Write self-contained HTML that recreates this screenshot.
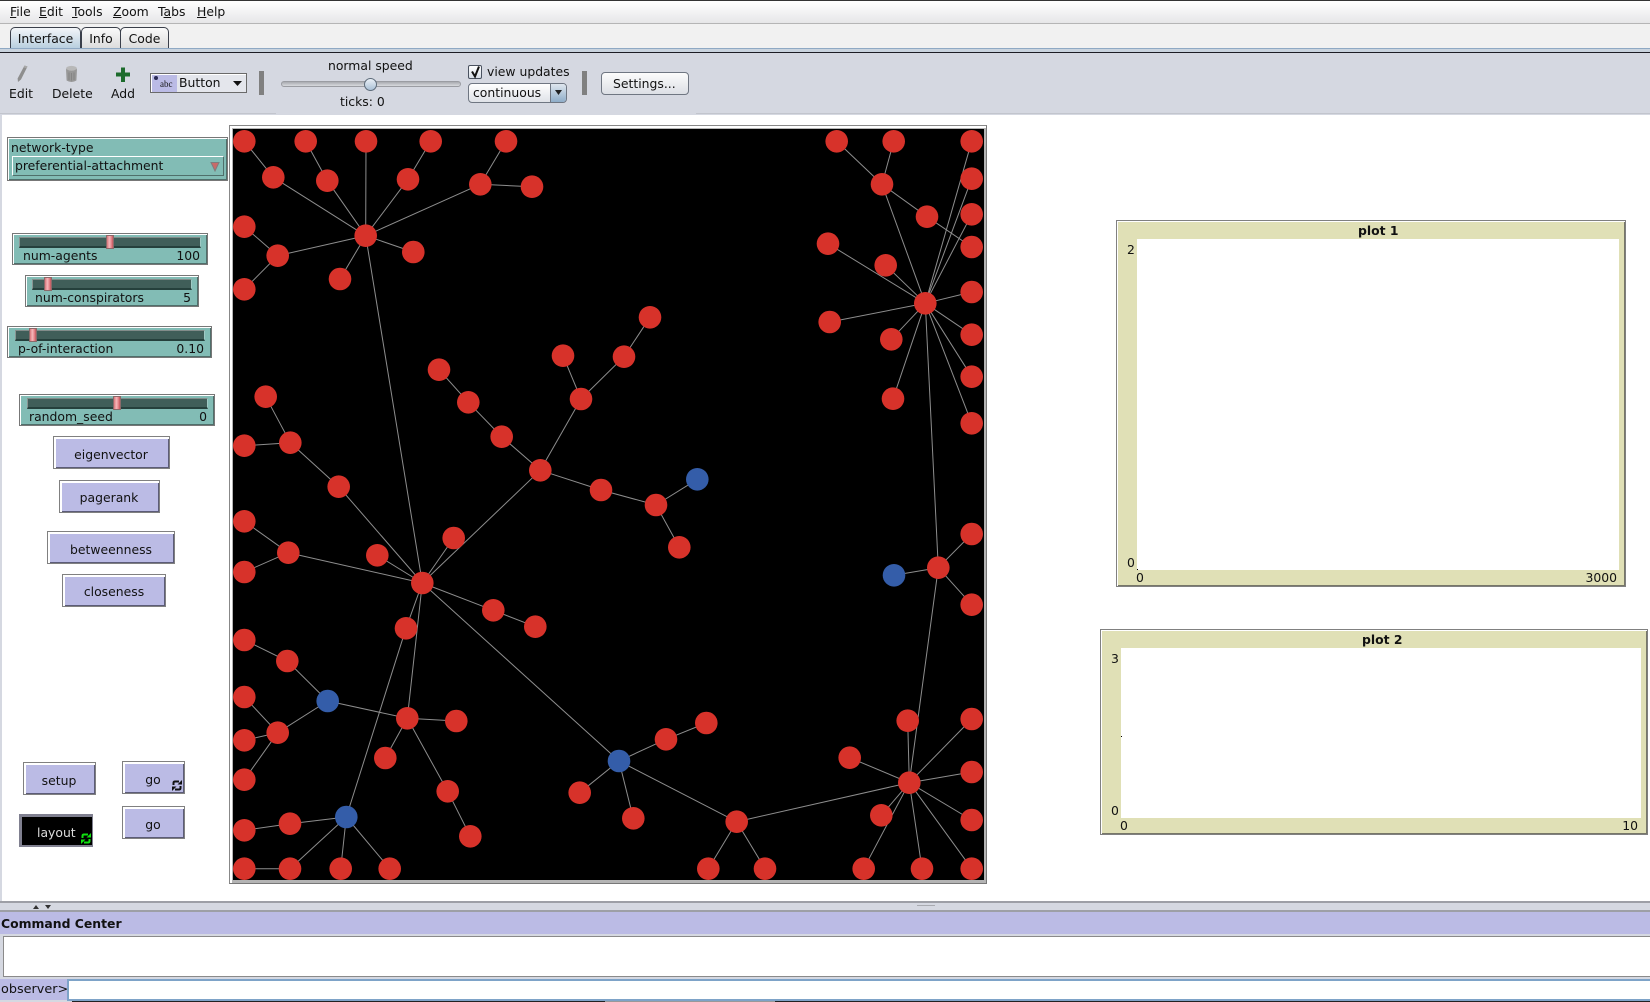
<!DOCTYPE html>
<html><head><meta charset="utf-8"><style>
html,body{margin:0;padding:0;background:#fff}
#r{position:relative;width:1650px;height:1002px;overflow:hidden;background:#fff;font:12.4px/16px "DejaVu Sans","Liberation Sans",sans-serif;color:#111}
#r div,#r span.t{position:absolute;box-sizing:border-box}
.t{white-space:nowrap}
.b{background:#bbbbe5;border:1px solid #808080;box-shadow:inset 2px 2px 0 #fff,inset -1px -1px 0 #5c5c78;text-align:center;line-height:33px;padding-right:1px}
.s{background:#82bcb5;border:1px solid #777;box-shadow:inset 1px 1px 0 #fff,inset -1px -1px 0 #4f6f6b;height:32px}
.tr{background:#405e59;border-top:1px solid #828c8a;border-left:1px solid #8a9593;border-bottom:2px solid #25403c;border-right:1px solid #9fc9c4;height:11px;top:3px}
.k{background:linear-gradient(90deg,#d8747a,#f5b8ba 40%,#e8898f 70%,#c0565c);border:1px solid #8a6a6a;width:8px;height:14px;top:1px}
.pl{background:#e0e0b6;border:1px solid #808080;box-shadow:inset 1px 1px 0 #fff,inset -1px -1px 0 #777768}
.tab{border:1px solid #3a3f4a;border-bottom:none;border-radius:5px 5px 0 0;background:linear-gradient(#fafafa,#dcdcdc);text-align:center;top:27px;height:21px;line-height:21px}
</style></head><body><div id="r">

<!-- menu -->
<div style="left:0;top:0;width:1650px;height:24px;background:linear-gradient(#fff,#e6e6e8);border-top:1px solid #333;border-bottom:1px solid #b5b5b5"></div>
<span class="t" style="left:10px;top:4px"><u>F</u>ile</span>
<span class="t" style="left:39px;top:4px"><u>E</u>dit</span>
<span class="t" style="left:72px;top:4px"><u>T</u>ools</span>
<span class="t" style="left:113px;top:4px"><u>Z</u>oom</span>
<span class="t" style="left:158px;top:4px">T<u>a</u>bs</span>
<span class="t" style="left:197px;top:4px"><u>H</u>elp</span>

<!-- tabs -->
<div style="left:0;top:24px;width:1650px;height:24px;background:#f1f1f1"></div>
<div class="tab" style="left:10px;width:71px;background:linear-gradient(#f2f5f8,#b9cfdf)">Interface</div>
<div class="tab" style="left:81px;width:40px">Info</div>
<div class="tab" style="left:120px;width:49px">Code</div>
<div style="left:0;top:48px;width:1650px;height:4px;background:#c9d3de;border-top:1px solid #8fa9c4"></div>
<div style="left:0;top:52px;width:1650px;height:1px;background:#1c1c24"></div>

<!-- toolbar -->
<div style="left:0;top:53px;width:1650px;height:62px;background:#d5d8e1"></div>
<div style="left:0;top:113px;width:276px;height:1px;background:#c2c5cd"></div>
<div style="left:696px;top:113px;width:954px;height:1px;background:#c2c5cd"></div>
<svg style="position:absolute;left:14px;top:64px" width="16" height="19" viewBox="0 0 16 19"><path d="M10.5 1.5 L13.5 2.5 L7 15.5 L4 18 L3.6 14.5 Z" fill="#8e8e8e"/><path d="M10.5 1.5 L13.5 2.5 L12.6 4.4 L9.6 3.2 Z" fill="#a8a8a8"/></svg>
<svg style="position:absolute;left:63px;top:65px" width="16" height="18" viewBox="0 0 16 18"><ellipse cx="8.500" cy="3.500" rx="5.500" ry="2.600" fill="#b8b8b8"/><path d="M3 4 L3.600 15.500 Q8.500 18.500 13.400 15.500 L14 4 Q8.500 7.500 3 4Z" fill="#989898"/><path d="M6 7.500 V15 M8.500 8 V15.500 M11 7.500 V15" stroke="#858585" stroke-width="1"/></svg>
<svg style="position:absolute;left:116px;top:67px" width="14" height="15" viewBox="0 0 14 15"><path d="M5 0.5h4v5h5v4H9v5.500H5V9.500H0v-4h5z" fill="#1c6b2c"/></svg>
<span class="t" style="left:9px;top:86px">Edit</span>
<span class="t" style="left:52px;top:86px">Delete</span>
<span class="t" style="left:111px;top:86px">Add</span>

<div style="left:150px;top:73px;width:97px;height:20px;background:#e4e6ec;border:1px solid #6a6a6a;box-shadow:inset 1px 1px 0 #fff"></div>
<div style="left:152px;top:75px;width:25px;height:17px;background:#bbbbe5"></div>
<span class="t" style="left:160px;top:77px;font:9px/14px 'Liberation Serif',serif">abc</span>
<div style="left:154px;top:76px;width:4px;height:4px;background:#2b2b55;border-radius:2px"></div>
<span class="t" style="left:179px;top:75px">Button</span>
<svg style="position:absolute;left:233px;top:81px" width="10" height="6"><path d="M0 0h9L4.500 5z" fill="#111"/></svg>

<div style="left:259px;top:71px;width:5px;height:24px;background:#808080"></div>
<div style="left:582px;top:71px;width:5px;height:24px;background:#808080"></div>

<span class="t" style="left:328px;top:58px">normal speed</span>
<div style="left:281px;top:81px;width:180px;height:6px;background:linear-gradient(#a9abb0,#d8dade);border:1px solid #9a9ca2;border-radius:3px"></div>
<div style="left:364px;top:78px;width:13px;height:13px;border-radius:50%;background:linear-gradient(#eaf0f6,#a9c0d6);border:1px solid #5d6b7a"></div>
<span class="t" style="left:340px;top:94px">ticks: 0</span>

<div style="left:468px;top:65px;width:14px;height:14px;background:linear-gradient(#fff,#d6dde6);border:1px solid #4a5260;border-radius:2px"></div>
<svg style="position:absolute;left:469px;top:64px" width="13" height="15"><path d="M3 7.500 L6 12.500 L10 2.500" fill="none" stroke="#111" stroke-width="2"/></svg>
<span class="t" style="left:487px;top:64px">view updates</span>

<div style="left:468px;top:83px;width:99px;height:20px;background:linear-gradient(#fff,#dfe2e8);border:1px solid #6f7682;border-radius:4px"></div>
<div style="left:550px;top:84px;width:16px;height:18px;background:linear-gradient(#dfe6ee,#8fadc9);border-left:1px solid #6f7682;border-radius:0 3px 3px 0"></div>
<svg style="position:absolute;left:555px;top:90px" width="8" height="6"><path d="M0 0h7L3.500 5z" fill="#222"/></svg>
<span class="t" style="left:473px;top:85px">continuous</span>

<div style="left:601px;top:72px;width:88px;height:23px;background:linear-gradient(#fcfcfc,#dcdfe5);border:1px solid #6f7682;border-radius:4px"></div>
<span class="t" style="left:613px;top:76px">Settings...</span>

<div style="left:0;top:115px;width:2px;height:787px;background:#d5d8e1"></div>

<!-- chooser -->
<div style="left:7px;top:137px;width:221px;height:44px;background:#82bcb5;border:1px solid #777;box-shadow:inset 1px 1px 0 #fff,inset -1px -1px 0 #4f6f6b"></div>
<span class="t" style="left:11px;top:140px">network-type</span>
<div style="left:12px;top:156px;width:212px;height:20px;background:#82bcb5;border:1px solid #fff;border-right-color:#4f6f6b;border-bottom-color:#4f6f6b"></div>
<span class="t" style="left:15px;top:158px">preferential-attachment</span>
<svg style="position:absolute;left:210px;top:161px" width="10" height="11"><path d="M1 1.500h8L5 10z" fill="#c96a68" stroke="#7d7d7d"/></svg>

<!-- sliders -->
<div class="s" style="left:12px;top:233px;width:196px"><div class="tr" style="left:6px;width:182px"></div><div class="k" style="left:93px"></div><span class="t" style="left:10px;top:14px">num-agents</span><span class="t" style="right:7px;top:14px">100</span></div>
<div class="s" style="left:25px;top:275px;width:174px"><div class="tr" style="left:6px;width:160px"></div><div class="k" style="left:18px"></div><span class="t" style="left:9px;top:14px">num-conspirators</span><span class="t" style="right:7px;top:14px">5</span></div>
<div class="s" style="left:7px;top:326px;width:205px"><div class="tr" style="left:7px;width:190px"></div><div class="k" style="left:21px"></div><span class="t" style="left:10px;top:14px">p-of-interaction</span><span class="t" style="right:7px;top:14px">0.10</span></div>
<div class="s" style="left:19px;top:394px;width:196px"><div class="tr" style="left:7px;width:181px"></div><div class="k" style="left:93px"></div><span class="t" style="left:9px;top:14px">random_seed</span><span class="t" style="right:7px;top:14px">0</span></div>

<!-- buttons -->
<div class="b" style="left:53px;top:436px;width:117px;height:33px;line-height:35px">eigenvector</div>
<div class="b" style="left:59px;top:480px;width:101px;height:33px">pagerank</div>
<div class="b" style="left:47px;top:531px;width:128px;height:33px;line-height:35px;padding-left:1px">betweenness</div>
<div class="b" style="left:62px;top:574px;width:104px;height:33px;padding-left:1px">closeness</div>
<div class="b" style="left:23px;top:762px;width:73px;height:33px;line-height:35px">setup</div>
<div class="b" style="left:122px;top:761px;width:63px;height:33px;line-height:35px">go</div>
<div class="b" style="left:122px;top:806px;width:63px;height:33px;line-height:35px">go</div>
<svg style="position:absolute;left:172px;top:780px" width="10" height="11" viewBox="0 0 10 11"><path d="M1.500 5 V3 Q1.500 1.500 3 1.500 H7" fill="none" stroke="#111" stroke-width="2"/><path d="M5.500 4.500 H10 V0 Z" fill="#111"/><path d="M8.500 6 V8 Q8.500 9.500 7 9.500 H3" fill="none" stroke="#111" stroke-width="2"/><path d="M4.500 6.500 H0 V11 Z" fill="#111"/></svg>

<div style="left:19px;top:814px;width:75px;height:33px;background:#808090;border-right:1px solid #fff"></div>
<div style="left:22px;top:817px;width:70px;height:28px;background:#000"></div>
<span class="t" style="left:37px;top:825px;color:#ddd">layout</span>
<svg style="position:absolute;left:81px;top:833px" width="10" height="11" viewBox="0 0 10 11"><path d="M1.500 5 V3 Q1.500 1.500 3 1.500 H7" fill="none" stroke="#10e010" stroke-width="2"/><path d="M5.500 4.500 H10 V0 Z" fill="#10e010"/><path d="M8.500 6 V8 Q8.500 9.500 7 9.500 H3" fill="none" stroke="#10e010" stroke-width="2"/><path d="M4.500 6.500 H0 V11 Z" fill="#10e010"/></svg>

<!-- view -->
<div style="left:229px;top:125px;width:758px;height:759px;background:#b4b4b4;border:1px solid #777;border-top-color:#888;border-left-color:#888;box-shadow:inset 2px 2px 0 #fff"></div>
<svg style="position:absolute;left:233px;top:129px;overflow:hidden;background:#000" width="751" height="751" viewBox="233 129 751 751">
<g stroke="#8d8d8d" stroke-width="1" fill="none">
<path d="M365.700 235.700L273.300 177.300M365.700 235.700L327.300 180.700M365.700 235.700L366 141.300M365.700 235.700L408 179.300M365.700 235.700L480.300 184.300M365.700 235.700L277.700 255.700M365.700 235.700L413.300 252M365.700 235.700L340 279M365.700 235.700L422.300 583"/>
<path d="M244.300 141.300L273.300 177.300M305.700 141.300L327.300 180.700M430.700 141.300L408 179.300M506 141.300L480.300 184.300M480.300 184.300L532 186.700M244.300 226.700L277.700 255.700M244.300 289.300L277.700 255.700"/>
<path d="M439 369.700L468.300 402.300L501.700 436.700L540.300 470.300M563 355.700L581 399M624 356.700L581 399M650 317.300L624 356.700M581 399L540.300 470.300M540.300 470.300L601 490L656 505M656 505L697.300 479.300M656 505L679.300 547.300M540.300 470.300L422.300 583"/>
<path d="M265.700 396.700L290.300 442.700M244.300 445.700L290.300 442.700M290.300 442.700L338.700 486.700L422.300 583"/>
<path d="M244.300 521.300L288.300 552.700M244.300 572L288.300 552.700M288.300 552.700L422.300 583M377.300 555.300L422.300 583M453.700 538L422.300 583M422.300 583L493.300 610.300L535.300 626.700M422.300 583L406 628.300L346.300 817M422.300 583L407.300 718.300M422.300 583L619 761"/>
<path d="M244.300 640L287.300 661L327.700 701M327.700 701L407.300 718.300M327.700 701L277.700 732.700M244.300 697L277.700 732.700M244.300 740.300L277.700 732.700M244.300 779.700L277.700 732.700M407.300 718.300L456.300 721M407.300 718.300L385.300 758M407.300 718.300L447.700 791.300L470.300 836.300"/>
<path d="M346.300 817L290 823.700L244.300 830.300M346.300 817L290 868.700L244.300 868.700M346.300 817L340.700 868.700M346.300 817L389.700 868.700"/>
<path d="M619 761L666 739.300L706.300 723M619 761L579.700 792.700M619 761L633.300 818.300M619 761L736.700 821.700M736.700 821.700L708.300 868.700M736.700 821.700L765 868.700M736.700 821.700L909.300 782.700"/>
<path d="M909.300 782.700L907.700 720.700M909.300 782.700L971.700 719M909.300 782.700L849.700 757.700M909.300 782.700L971.700 772M909.300 782.700L881.300 815.300M909.300 782.700L971.700 820M909.300 782.700L863.700 868.700M909.300 782.700L922 868.700M909.300 782.700L971.700 868.700M909.300 782.700L938.300 567.700"/>
<path d="M938.300 567.700L971.700 534M938.300 567.700L894 575.300M938.300 567.700L971.700 604.700M938.300 567.700L925.300 303.300"/>
<path d="M925.300 303.300L882 184.300M925.300 303.300L971.700 141.300M925.300 303.300L971.700 178.700M925.300 303.300L971.700 214.300M925.300 303.300L828 243.700M925.300 303.300L885.700 265.300M925.300 303.300L971.700 292M925.300 303.300L829.700 322M925.300 303.300L971.700 334.700M925.300 303.300L891.300 339.300M925.300 303.300L971.700 376.700M925.300 303.300L893 398.700M925.300 303.300L971.700 423.300M882 184.300L836.700 141.300M882 184.300L893.700 141.300M882 184.300L927 216.700L971.700 247"/>
</g>
<g fill="#d7322a">
<circle cx="244.300" cy="141.300" r="11.300"/><circle cx="305.700" cy="141.300" r="11.300"/><circle cx="366" cy="141.300" r="11.300"/><circle cx="430.700" cy="141.300" r="11.300"/><circle cx="506" cy="141.300" r="11.300"/><circle cx="273.300" cy="177.300" r="11.300"/><circle cx="327.300" cy="180.700" r="11.300"/><circle cx="408" cy="179.300" r="11.300"/><circle cx="480.300" cy="184.300" r="11.300"/><circle cx="532" cy="186.700" r="11.300"/><circle cx="365.700" cy="235.700" r="11.300"/><circle cx="244.300" cy="226.700" r="11.300"/><circle cx="277.700" cy="255.700" r="11.300"/><circle cx="413.300" cy="252" r="11.300"/><circle cx="340" cy="279" r="11.300"/><circle cx="244.300" cy="289.300" r="11.300"/>
<circle cx="563" cy="355.700" r="11.300"/><circle cx="624" cy="356.700" r="11.300"/><circle cx="650" cy="317.300" r="11.300"/><circle cx="439" cy="369.700" r="11.300"/><circle cx="581" cy="399" r="11.300"/><circle cx="468.300" cy="402.300" r="11.300"/><circle cx="265.700" cy="396.700" r="11.300"/><circle cx="501.700" cy="436.700" r="11.300"/><circle cx="290.300" cy="442.700" r="11.300"/><circle cx="244.300" cy="445.700" r="11.300"/><circle cx="540.300" cy="470.300" r="11.300"/><circle cx="338.700" cy="486.700" r="11.300"/><circle cx="601" cy="490" r="11.300"/><circle cx="656" cy="505" r="11.300"/><circle cx="679.300" cy="547.300" r="11.300"/>
<circle cx="244.300" cy="521.300" r="11.300"/><circle cx="288.300" cy="552.700" r="11.300"/><circle cx="377.300" cy="555.300" r="11.300"/><circle cx="453.700" cy="538" r="11.300"/><circle cx="244.300" cy="572" r="11.300"/><circle cx="422.300" cy="583" r="11.300"/><circle cx="493.300" cy="610.300" r="11.300"/><circle cx="535.300" cy="626.700" r="11.300"/><circle cx="406" cy="628.300" r="11.300"/><circle cx="244.300" cy="640" r="11.300"/><circle cx="287.300" cy="661" r="11.300"/><circle cx="244.300" cy="697" r="11.300"/><circle cx="407.300" cy="718.300" r="11.300"/><circle cx="456.300" cy="721" r="11.300"/><circle cx="277.700" cy="732.700" r="11.300"/><circle cx="244.300" cy="740.300" r="11.300"/><circle cx="385.300" cy="758" r="11.300"/><circle cx="244.300" cy="779.700" r="11.300"/><circle cx="447.700" cy="791.300" r="11.300"/><circle cx="579.700" cy="792.700" r="11.300"/><circle cx="470.300" cy="836.300" r="11.300"/><circle cx="290" cy="823.700" r="11.300"/><circle cx="244.300" cy="830.300" r="11.300"/><circle cx="244.300" cy="868.700" r="11.300"/><circle cx="290" cy="868.700" r="11.300"/><circle cx="340.700" cy="868.700" r="11.300"/><circle cx="389.700" cy="868.700" r="11.300"/>
<circle cx="836.700" cy="141.300" r="11.300"/><circle cx="893.700" cy="141.300" r="11.300"/><circle cx="971.700" cy="141.300" r="11.300"/><circle cx="971.700" cy="178.700" r="11.300"/><circle cx="882" cy="184.300" r="11.300"/><circle cx="927" cy="216.700" r="11.300"/><circle cx="971.700" cy="214.300" r="11.300"/><circle cx="971.700" cy="247" r="11.300"/><circle cx="828" cy="243.700" r="11.300"/><circle cx="885.700" cy="265.300" r="11.300"/><circle cx="971.700" cy="292" r="11.300"/><circle cx="925.300" cy="303.300" r="11.300"/><circle cx="829.700" cy="322" r="11.300"/><circle cx="971.700" cy="334.700" r="11.300"/><circle cx="891.300" cy="339.300" r="11.300"/><circle cx="971.700" cy="376.700" r="11.300"/><circle cx="893" cy="398.700" r="11.300"/><circle cx="971.700" cy="423.300" r="11.300"/>
<circle cx="971.700" cy="534" r="11.300"/><circle cx="938.300" cy="567.700" r="11.300"/><circle cx="971.700" cy="604.700" r="11.300"/><circle cx="706.300" cy="723" r="11.300"/><circle cx="666" cy="739.300" r="11.300"/><circle cx="633.300" cy="818.300" r="11.300"/><circle cx="907.700" cy="720.700" r="11.300"/><circle cx="971.700" cy="719" r="11.300"/><circle cx="849.700" cy="757.700" r="11.300"/><circle cx="909.300" cy="782.700" r="11.300"/><circle cx="971.700" cy="772" r="11.300"/><circle cx="881.300" cy="815.300" r="11.300"/><circle cx="971.700" cy="820" r="11.300"/><circle cx="736.700" cy="821.700" r="11.300"/><circle cx="708.300" cy="868.700" r="11.300"/><circle cx="765" cy="868.700" r="11.300"/><circle cx="863.700" cy="868.700" r="11.300"/><circle cx="922" cy="868.700" r="11.300"/><circle cx="971.700" cy="868.700" r="11.300"/>
</g>
<g fill="#345da9">
<circle cx="697.300" cy="479.300" r="11.300"/><circle cx="894" cy="575.300" r="11.300"/><circle cx="327.700" cy="701" r="11.300"/><circle cx="346.300" cy="817" r="11.300"/><circle cx="619" cy="761" r="11.300"/>
</g>
</svg>

<!-- plots -->
<div class="pl" style="left:1116px;top:220px;width:510px;height:367px"></div>
<div style="left:1137px;top:239px;width:482px;height:331px;background:#fff"></div>
<div style="left:1137px;top:569px;width:1px;height:1px;background:#000"></div>
<span class="t" style="left:1358px;top:223px;font-weight:bold;width:40px;text-align:center">plot 1</span>
<span class="t" style="left:1127px;top:242px">2</span>
<span class="t" style="left:1127px;top:555px">0</span>
<span class="t" style="left:1136px;top:570px">0</span>
<span class="t" style="left:1576px;top:570px;width:41px;text-align:right">3000</span>

<div class="pl" style="left:1100px;top:629px;width:548px;height:206px"></div>
<div style="left:1121px;top:648px;width:520px;height:170px;background:#fff"></div>
<div style="left:1121px;top:736px;width:1px;height:1px;background:#000"></div>
<span class="t" style="left:1362px;top:632px;font-weight:bold;width:40px;text-align:center">plot 2</span>
<span class="t" style="left:1111px;top:651px">3</span>
<span class="t" style="left:1111px;top:803px">0</span>
<span class="t" style="left:1120px;top:818px">0</span>
<span class="t" style="left:1608px;top:818px;width:30px;text-align:right">10</span>

<!-- bottom -->
<div style="left:0;top:901px;width:1650px;height:101px;background:#d5d8e1"></div>
<div style="left:0;top:901px;width:1650px;height:2px;background:#9d9fa6"></div>
<div style="left:0;top:910px;width:1650px;height:2px;background:#9d9fa6"></div>
<svg style="position:absolute;left:32px;top:904px" width="24" height="6"><path d="M1 5h6L4 1zM13 1h6L16 5z" fill="#333"/></svg>
<div style="left:917px;top:905px;width:18px;height:1px;background:#a8aab0"></div>
<div style="left:0;top:912px;width:1650px;height:22px;background:#bbbbe5"></div>
<span class="t" style="left:1px;top:916px;font-weight:bold;font-size:12.4px">Command Center</span>
<div style="left:3px;top:936px;width:1647px;height:41px;background:#fff;border:1px solid #8a8a8a;border-right:none"></div>
<div style="left:0;top:979px;width:67px;height:21px;background:#bbbbe5"></div>
<span class="t" style="left:1px;top:982px;font-size:12.8px">observer&gt;</span>
<div style="left:67px;top:979px;width:1583px;height:22px;background:#fff;border:2px solid #7ea3c8;border-right:none"></div>
<div style="left:72px;top:1001px;width:533px;height:1px;background:#222"></div>
<div style="left:605px;top:1001px;width:170px;height:1px;background:#999"></div>
<div style="left:775px;top:1001px;width:875px;height:1px;background:#222"></div>
</div></body></html>
